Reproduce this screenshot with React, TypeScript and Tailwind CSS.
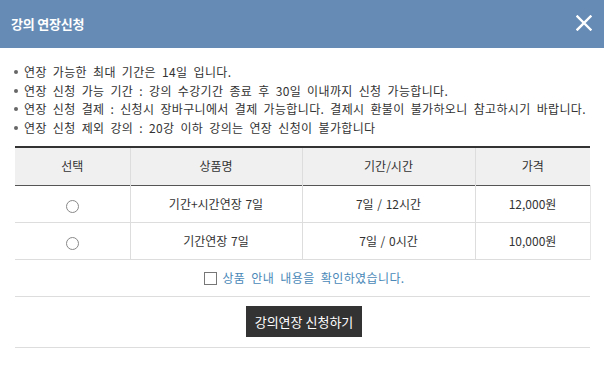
import React from "react";

const font = { fontFamily: '"Noto Sans CJK KR", "Noto Sans", sans-serif' };

export default function App() {
  const notes = [
    "연장 가능한 최대 기간은 14일 입니다.",
    "연장 신청 가능 기간 : 강의 수강기간 종료 후 30일 이내까지 신청 가능합니다.",
    "연장 신청 결제 : 신청시 장바구니에서 결제 가능합니다. 결제시 환불이 불가하오니 참고하시기 바랍니다.",
    "연장 신청 제외 강의 : 20강 이하 강의는 연장 신청이 불가합니다",
  ];
  const rows = [
    { name: "기간+시간연장 7일", period: "7일 / 12시간", price: "12,000원" },
    { name: "기간연장 7일", period: "7일 / 0시간", price: "10,000원" },
  ];
  return (
    <div className="w-[604px] h-[373px] bg-white overflow-hidden text-[#333]" style={font}>
      <div className="h-12 bg-[#668cb6] flex items-center justify-between pl-[11px] pr-[12px]">
        <span className="text-white font-bold text-[13px] tracking-[-0.2px]">강의 연장신청</span>
        <svg width="16" height="16" viewBox="0 0 16 16" className="mb-[2px]">
          <path d="M1.5 1.5 L14.5 14.5 M14.5 1.5 L1.5 14.5" stroke="#fff" strokeWidth="2.4" strokeLinecap="square" />
        </svg>
      </div>
      <div className="pl-[15px] pr-[14px]">
        <ul className="mt-[15px] flex flex-col">
          {notes.map((n) => (
            <li key={n} className="flex items-center h-[18.5px] text-[12px] leading-[18px] tracking-[0.35px] [word-spacing:3px]">
              <span className="w-[4px] h-[4px] rounded-full bg-[#666] mr-[6px] -ml-[1px] shrink-0" />
              <span className="whitespace-nowrap">{n}</span>
            </li>
          ))}
        </ul>
        <table className="mt-[9px] w-[575px] border-collapse table-fixed text-[12px] [word-spacing:1px]">
          <colgroup>
            <col className="w-[115px]" />
            <col className="w-[172px]" />
            <col className="w-[173px]" />
            <col className="w-[115px]" />
          </colgroup>
          <thead>
            <tr className="h-[38px] bg-[#f0f0f0] border-t-2 border-t-[#333] border-b border-b-[#555]">
              <th className="font-normal text-center">선택</th>
              <th className="font-normal text-center border-l border-l-[#ddd]">상품명</th>
              <th className="font-normal text-center border-l border-l-[#ddd]">기간/시간</th>
              <th className="font-normal text-center border-l border-l-[#ddd]">가격</th>
            </tr>
          </thead>
          <tbody>
            {rows.map((r) => (
              <tr key={r.name} className="h-[37px] border-b border-b-[#ddd]">
                <td className="text-center">
                  <span className="inline-block w-[13px] h-[13px] rounded-full border border-[#888] bg-white align-middle mt-[2px]" />
                </td>
                <td className="text-center border-l border-l-[#ddd]">{r.name}</td>
                <td className="text-center border-l border-l-[#ddd]">{r.period}</td>
                <td className="text-center border-l border-l-[#ddd] border-r border-r-[#e6e6e6]">{r.price}</td>
              </tr>
            ))}
          </tbody>
        </table>
        <div className="h-[37px] border-b border-b-[#ddd] flex items-center justify-center pl-[4px]">
          <span className="w-[13px] h-[13px] border border-[#777] bg-white mr-[5px] mt-[2px]" />
          <span className="text-[12px] text-[#4a88b8] tracking-[0.4px] [word-spacing:3px]">상품 안내 내용을 확인하였습니다.</span>
        </div>
        <div className="h-[51px] border-b border-b-[#ddd] flex items-center justify-center">
          <button className="w-[116px] h-[31px] bg-[#333] text-white text-[13px] ml-[3px]">
            강의연장 신청하기
          </button>
        </div>
      </div>
    </div>
  );
}
